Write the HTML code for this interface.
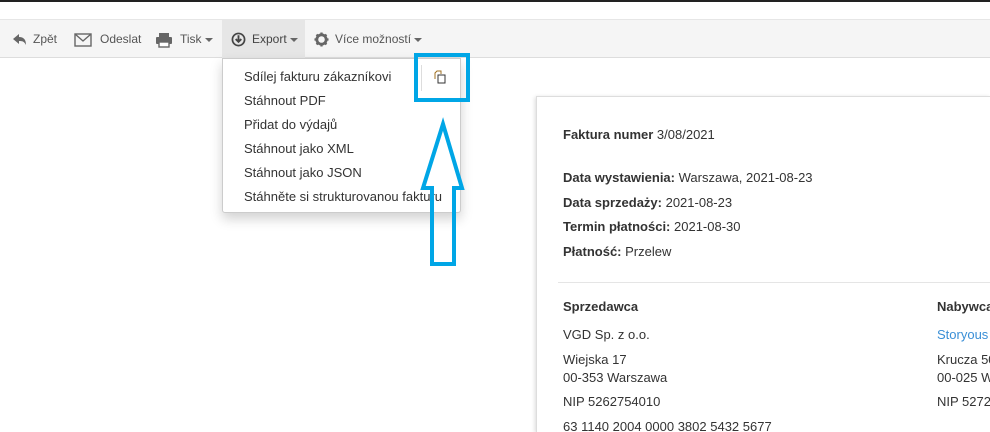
<!DOCTYPE html>
<html><head><meta charset="utf-8"><style>
*{margin:0;padding:0;box-sizing:border-box}
html,body{width:990px;height:432px;overflow:hidden}
body{background:#fff;font-family:"Liberation Sans",Arial,sans-serif;color:#333;position:relative}
#wrap{position:absolute;left:0;top:0;width:990px;height:432px;overflow:hidden}
.a{position:absolute;white-space:nowrap}
#top{position:absolute;left:0;top:0;width:990px;height:2px;background:#222}
#tb{position:absolute;left:0;top:19px;width:990px;height:39px;background:#f5f5f5;border-top:1px solid #e6e6e6;border-bottom:1px solid #ddd}
.btn{position:absolute;top:0;height:38px;line-height:38px;font-size:12px;color:#555}
.car{display:inline-block;width:0;height:0;border-left:4px solid transparent;border-right:4px solid transparent;border-top:4px solid #666;vertical-align:middle;margin-left:3px}
#dd{position:absolute;left:222px;top:58px;width:239px;height:155px;background:#fff;border:1px solid #ccc;border-radius:0 0 3px 3px;box-shadow:0 6px 12px rgba(0,0,0,.18)}
.it{position:absolute;left:21px;font-size:13px;color:#333}
#card{position:absolute;left:536px;top:96px;width:454px;height:336px;background:#fff;border-left:1px solid #ddd;border-top:1px solid #ddd;box-shadow:-1px 1px 4px rgba(0,0,0,.15);overflow:hidden}
.t{position:absolute;font-size:13px;color:#333;white-space:nowrap}
b{font-weight:bold}
</style></head><body><div id="wrap">
<div id="top"></div>
<div id="tb">
 <div class="btn" style="left:12px"><svg width="16" height="14" viewBox="0 0 16 14" style="vertical-align:middle;margin-right:5px"><path d="M1 6 L7 1 V4 C12 4 14 7 14 12 C12 8 10 8 7 8 V11 Z" fill="#666"/></svg>Zpět</div>
 <div class="btn" style="left:74px"><svg width="18" height="14" viewBox="0 0 18 14" style="vertical-align:middle;margin-right:8px"><rect x="1" y="1" width="16" height="12" fill="none" stroke="#666" stroke-width="1.4"/><path d="M1 1 L9 8 L17 1" fill="none" stroke="#666" stroke-width="1.4"/></svg>Odeslat</div>
 <div class="btn" style="left:155px"><svg width="18" height="16" viewBox="0 0 18 16" style="vertical-align:middle;margin-right:7px"><rect x="4" y="1" width="10" height="5" fill="#666"/><rect x="1" y="5" width="16" height="7" rx="1" fill="#666"/><rect x="4" y="10" width="10" height="5" fill="#fff" stroke="#666" stroke-width="1.4"/></svg>Tisk<span class="car"></span></div>
 <div class="btn" style="left:222px;width:83px;background:#e6e6e6;padding-left:9px;color:#444"><svg width="15" height="15" viewBox="0 0 16 16" style="vertical-align:middle;margin-right:6px"><circle cx="8" cy="8" r="6.5" fill="none" stroke="#444" stroke-width="1.8"/><path d="M8 3.5 V10 M5 7.5 L8 10.5 L11 7.5" fill="none" stroke="#444" stroke-width="2"/></svg>Export<span class="car"></span></div>
 <div class="btn" style="left:314px"><svg width="15" height="15" viewBox="0 0 16 16" style="vertical-align:middle;margin-right:6px"><circle cx="8" cy="8" r="5" fill="none" stroke="#666" stroke-width="3"/><path d="M8 0.5V3.5M8 12.5V15.5M0.5 8H3.5M12.5 8H15.5M2.7 2.7L4.8 4.8M11.2 11.2L13.3 13.3M2.7 13.3L4.8 11.2M11.2 4.8L13.3 2.7" stroke="#666" stroke-width="2.4"/></svg>Více možností<span class="car"></span></div>
</div>
<div id="dd">
 <div class="it" style="top:10px">Sdílej fakturu zákazníkovi</div>
 <div class="it" style="top:34px">Stáhnout PDF</div>
 <div class="it" style="top:58px">Přidat do výdajů</div>
 <div class="it" style="top:82px">Stáhnout jako XML</div>
 <div class="it" style="top:106px">Stáhnout jako JSON</div>
 <div class="it" style="top:130px">Stáhněte si strukturovanou fakturu</div>
 <div style="position:absolute;left:198px;top:6px;width:1px;height:26px;background:#ddd"></div>
 <svg style="position:absolute;left:210px;top:11px" width="14" height="14" viewBox="0 0 14 14"><path d="M2 9 V3 L4 1 H8 V4" fill="none" stroke="#a07020" stroke-width="1"/><rect x="5" y="5" width="7" height="8" fill="#fff" stroke="#333" stroke-width="1"/></svg>
</div>
<svg style="position:absolute;left:0;top:0" width="990" height="432">
 <rect x="416" y="55" width="52" height="45" fill="none" stroke="#00a6e6" stroke-width="4"/>
 <path d="M443 124 L462 188 H454 V264 H432 V188 H423 Z" fill="none" stroke="#00a6e6" stroke-width="4"/>
</svg>
<div id="card">
 <div class="t" style="left:26px;top:30px"><b>Faktura numer</b> 3/08/2021</div>
 <div class="t" style="left:26px;top:73px"><b>Data wystawienia:</b> Warszawa, 2021-08-23</div>
 <div class="t" style="left:26px;top:98px"><b>Data sprzedaży:</b> 2021-08-23</div>
 <div class="t" style="left:26px;top:122px"><b>Termin płatności:</b> 2021-08-30</div>
 <div class="t" style="left:26px;top:147px"><b>Płatność:</b> Przelew</div>
 <div style="position:absolute;left:21px;top:185px;width:433px;height:1px;background:#e5e5e5"></div>
 <div class="t" style="left:26px;top:202px"><b>Sprzedawca</b></div>
 <div class="t" style="left:26px;top:230px">VGD Sp. z o.o.</div>
 <div class="t" style="left:26px;top:255px">Wiejska 17</div>
 <div class="t" style="left:26px;top:273px">00-353 Warszawa</div>
 <div class="t" style="left:26px;top:297px">NIP 5262754010</div>
 <div class="t" style="left:26px;top:322px">63 1140 2004 0000 3802 5432 5677</div>
 <div class="t" style="left:400px;top:202px"><b>Nabywca</b></div>
 <div class="t" style="left:400px;top:230px;color:#3a8fd6">Storyous</div>
 <div class="t" style="left:400px;top:255px">Krucza 50</div>
 <div class="t" style="left:400px;top:273px">00-025 Warszawa</div>
 <div class="t" style="left:400px;top:297px">NIP 5272</div>
</div>
</div></body></html>
